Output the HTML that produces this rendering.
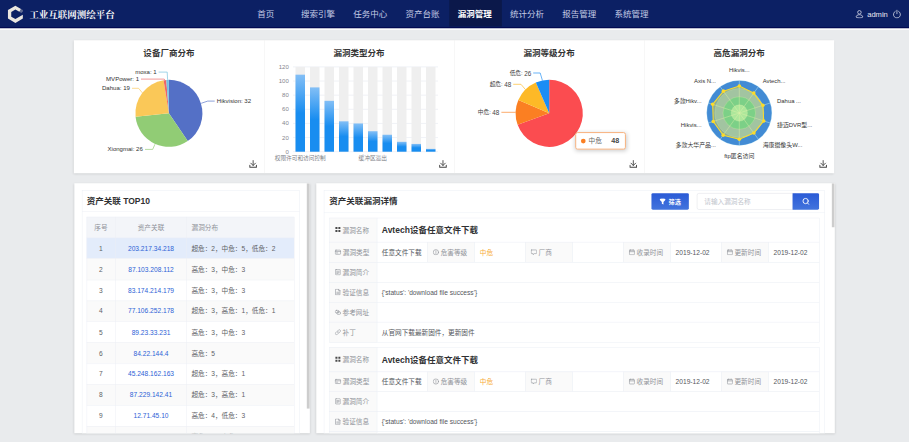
<!DOCTYPE html><html lang="zh-CN"><head><meta charset="utf-8"><title>工业互联网测绘平台</title><style>
*{box-sizing:border-box;margin:0;padding:0}
html,body{width:909px;height:442px;overflow:hidden;background:#e9ebed}
body{font-family:"Liberation Sans","Noto Sans CJK SC",sans-serif;color:#303133}
#root{position:absolute;left:0;top:0;width:1920px;height:934px;transform:scale(0.473438);transform-origin:0 0;background:#e9ebed;overflow:hidden}
.abs{position:absolute}
.hdr{position:absolute;left:0;top:0;width:1920px;height:59.800px;background:#0c2064;border-bottom:3.400px solid #020a52}
.hline{position:absolute;left:0;top:59.800px;width:1920px;height:3.600px;background:#fff}
.brand{position:absolute;left:62.1px;top:0;height:60px;line-height:61px;font-family:"Liberation Serif","Noto Serif CJK SC",serif;font-weight:700;font-size:20px;color:#f4f4f6;white-space:nowrap}
.nav{position:absolute;top:0;height:56.400px;line-height:60px;text-align:center;font-size:18px;color:#c4cbe5;white-space:nowrap;padding-right:3px}
.nav.on{background:#0b184a;color:#fff;font-weight:700}
.user{position:absolute;top:0;height:60px;line-height:60px;font-size:16px;color:#e6e8f2}
.card{position:absolute;background:#fff;box-shadow:0 2px 5px rgba(0,0,0,.13)}
.ctitle{position:absolute;font-weight:700;font-size:18px;color:#333;text-align:center;white-space:nowrap;line-height:24px}
.vdiv{position:absolute;width:1px;background:#efefef}
.inner{position:absolute;border:1px solid #ebeef5;background:#fff}
.ptitle{position:absolute;font-weight:700;font-size:18px;color:#303133;white-space:nowrap;line-height:24px}
.hsep{position:absolute;height:1px;background:#ebeef5}
.thumb{position:absolute;background:#cdcdcd}
.cell{position:absolute;font-size:14px;line-height:20px;white-space:nowrap;color:#606266}
.lab{position:absolute;background:#fafafa;border:1px solid #ebeef5;font-size:14px;color:#909399;white-space:nowrap}
.con{position:absolute;background:#fff;border:1px solid #ebeef5;font-size:14px;color:#5a5d63;white-space:nowrap}
.lab span,.con span{position:absolute;top:50%;transform:translateY(-50%);line-height:20px}
</style></head><body><div id="root">
<div class="hdr"></div><div class="hline"></div>
<svg class="abs" style="left:0;top:0" width="63.37" height="60" viewBox="0 0 63.37 60"><path d="M44.36 18.86 L32.53 12.04 L16.79 21.12 L16.79 39.29 L32.53 48.37 L48.26 39.29 L48.26 31.26 L32.53 40.32 L23.76 35.27 L23.76 25.14 L32.53 20.09 L40.87 24.9Z" fill="#ebe7e0"/><path d="M44.36 18.86 L48.26 21.12 L48.26 24.5 L45.2 27.25 L40.87 24.9Z" fill="#ebe7e0" opacity=".38"/></svg>
<div class="brand">工业互联网测绘平台</div>
<div class="nav" style="left:507.78px;width:110.36px">首页</div>
<div class="nav" style="left:618.14px;width:110.36px">搜索引擎</div>
<div class="nav" style="left:728.5px;width:110.36px">任务中心</div>
<div class="nav" style="left:838.86px;width:110.36px">资产台账</div>
<div class="nav on" style="left:949.23px;width:110.36px">漏洞管理</div>
<div class="nav" style="left:1059.59px;width:110.36px">统计分析</div>
<div class="nav" style="left:1169.95px;width:110.36px">报告管理</div>
<div class="nav" style="left:1280.32px;width:110.36px">系统管理</div>
<svg class="abs" style="left:1806.36px;top:19.64px" width="18.59" height="19.01" viewBox="0 0 18 18" fill="none" stroke="#e6e8f2" stroke-width="1.5"><circle cx="9" cy="5.6" r="3.6"/><path d="M2.2 15.2c0-3 3-4.6 6.8-4.6s6.800 1.600 6.800 4.600c0 1-3 1.700-6.800 1.700s-6.800-.7-6.800-1.700z"/></svg>
<div class="user" style="left:1831.71px">admin</div>
<svg class="abs" style="left:1885.36px;top:20.28px" width="19.01" height="19.01" viewBox="0 0 18 18" fill="none" stroke="#e6e8f2" stroke-width="1.5" stroke-linecap="round"><path d="M5.600 3.800a7 7 0 1 0 6.800 0"/><path d="M9 1.300v7.200"/></svg>
<div class="card" style="left:156.09px;top:84.7px;width:1605.91px;height:280.92px"></div>
<div class="ctitle" style="left:156.09px;width:401.48px;top:99.74px">设备厂商分布</div>
<svg class="abs" style="left:525.89px;top:337.74px" width="17.32" height="17.32" viewBox="0 0 18 18" fill="none" stroke="#444" stroke-width="1.900" stroke-linecap="round" stroke-linejoin="round"><path d="M9 1.200v10.600M3.900 6.900l5.100 5.100 5.100-5.100" stroke-width="2"/><path d="M1.800 11.600v4.200h14.400v-4.200" stroke-width="2.200"/></svg>
<div class="vdiv" style="left:557.57px;top:84.7px;height:280.92px"></div>
<div class="ctitle" style="left:557.57px;width:401.48px;top:99.74px">漏洞类型分布</div>
<svg class="abs" style="left:927.37px;top:337.74px" width="17.32" height="17.32" viewBox="0 0 18 18" fill="none" stroke="#444" stroke-width="1.900" stroke-linecap="round" stroke-linejoin="round"><path d="M9 1.200v10.600M3.900 6.900l5.100 5.100 5.100-5.100" stroke-width="2"/><path d="M1.800 11.600v4.200h14.400v-4.200" stroke-width="2.200"/></svg>
<div class="vdiv" style="left:959.05px;top:84.7px;height:280.92px"></div>
<div class="ctitle" style="left:959.05px;width:401.48px;top:99.74px">漏洞等级分布</div>
<svg class="abs" style="left:1328.84px;top:337.74px" width="17.32" height="17.32" viewBox="0 0 18 18" fill="none" stroke="#444" stroke-width="1.900" stroke-linecap="round" stroke-linejoin="round"><path d="M9 1.200v10.600M3.900 6.900l5.100 5.100 5.100-5.100" stroke-width="2"/><path d="M1.800 11.600v4.200h14.400v-4.200" stroke-width="2.200"/></svg>
<div class="vdiv" style="left:1360.53px;top:84.7px;height:280.92px"></div>
<div class="ctitle" style="left:1360.53px;width:401.48px;top:99.74px">高危漏洞分布</div>
<svg class="abs" style="left:1730.32px;top:337.74px" width="17.32" height="17.32" viewBox="0 0 18 18" fill="none" stroke="#444" stroke-width="1.900" stroke-linecap="round" stroke-linejoin="round"><path d="M9 1.200v10.600M3.900 6.900l5.100 5.100 5.100-5.100" stroke-width="2"/><path d="M1.800 11.600v4.200h14.400v-4.200" stroke-width="2.200"/></svg>
<svg class="abs" style="left:0;top:0;font-family:'Liberation Sans','Noto Sans CJK SC',sans-serif" width="1920" height="934" viewBox="0 0 1920 934"><path d="M356.75 239.31 L356.75 168.55 A70.76 70.76 0 0 1 396.5 297.85 Z" fill="#5470c6"/><path d="M356.75 239.31 L396.5 297.85 A70.76 70.76 0 0 1 286.34 246.34 Z" fill="#91cc75"/><path d="M356.75 239.31 L286.34 246.34 A70.76 70.76 0 0 1 345.54 169.45 Z" fill="#fac858"/><path d="M356.75 239.31 L345.54 169.45 A70.76 70.76 0 0 1 351.13 168.78 Z" fill="#ee6666"/><path d="M356.75 239.31 L351.13 168.78 A70.76 70.76 0 0 1 356.75 168.55 Z" fill="#73c0de"/><polyline points="424.98,218.19 438.71,213.54 453.49,213.54" fill="none" stroke="#5470c6" stroke-width="1.4"/><text x="457.93" y="213.54" font-size="12.8" fill="#333" text-anchor="start" dominant-baseline="central" font-weight="400">Hikvision: 32</text><polyline points="327.39,304.58 322.53,315.56 306.27,315.56" fill="none" stroke="#91cc75" stroke-width="1.4"/><text x="301.62" y="315.56" font-size="12.8" fill="#333" text-anchor="end" dominant-baseline="central" font-weight="400">Xiongmai: 26</text><polyline points="300.78,196.22 292.75,186.51 278.81,186.51" fill="none" stroke="#fac858" stroke-width="1.4"/><text x="274.38" y="186.51" font-size="12.8" fill="#333" text-anchor="end" dominant-baseline="central" font-weight="400">Dahua: 19</text><polyline points="348.3,168.98 346.83,167.08 297.82,167.08" fill="none" stroke="#ee6666" stroke-width="1.4"/><text x="293.6" y="167.08" font-size="12.8" fill="#333" text-anchor="end" dominant-baseline="central" font-weight="400">MVPower: 1</text><polyline points="354.01,168.55 353.16,152.29 335.0,152.29" fill="none" stroke="#73c0de" stroke-width="1.4"/><text x="330.98" y="152.29" font-size="12.8" fill="#333" text-anchor="end" dominant-baseline="central" font-weight="400">moxa: 1</text><defs><linearGradient id="bg" x1="0" y1="0" x2="0" y2="1"><stop offset="0" stop-color="#83bff6"/><stop offset="0.5" stop-color="#188df0"/><stop offset="1" stop-color="#188df0"/></linearGradient></defs><line x1="618.88" x2="925.15" y1="320.42" y2="320.42" stroke="#dfe4ee" stroke-width="1"/><text x="610.01" y="320.42" font-size="12.8" fill="#84868e" text-anchor="end" dominant-baseline="central" font-weight="400">0</text><line x1="618.88" x2="925.15" y1="290.57" y2="290.57" stroke="#dfe4ee" stroke-width="1"/><text x="610.01" y="290.57" font-size="12.8" fill="#84868e" text-anchor="end" dominant-baseline="central" font-weight="400">20</text><line x1="618.88" x2="925.15" y1="260.72" y2="260.72" stroke="#dfe4ee" stroke-width="1"/><text x="610.01" y="260.72" font-size="12.8" fill="#84868e" text-anchor="end" dominant-baseline="central" font-weight="400">40</text><line x1="618.88" x2="925.15" y1="230.86" y2="230.86" stroke="#dfe4ee" stroke-width="1"/><text x="610.01" y="230.86" font-size="12.8" fill="#84868e" text-anchor="end" dominant-baseline="central" font-weight="400">60</text><line x1="618.88" x2="925.15" y1="201.01" y2="201.01" stroke="#dfe4ee" stroke-width="1"/><text x="610.01" y="201.01" font-size="12.8" fill="#84868e" text-anchor="end" dominant-baseline="central" font-weight="400">80</text><line x1="618.88" x2="925.15" y1="171.16" y2="171.16" stroke="#dfe4ee" stroke-width="1"/><text x="610.01" y="171.16" font-size="12.8" fill="#84868e" text-anchor="end" dominant-baseline="central" font-weight="400">100</text><line x1="618.88" x2="925.15" y1="141.31" y2="141.31" stroke="#dfe4ee" stroke-width="1"/><text x="610.01" y="141.31" font-size="12.8" fill="#84868e" text-anchor="end" dominant-baseline="central" font-weight="400">120</text><rect x="624.16" y="141.31" width="20.07" height="179.12" fill="#efefef"/><rect x="624.16" y="157.73" width="20.07" height="162.7" fill="url(#bg)"/><rect x="654.79" y="141.31" width="20.07" height="179.12" fill="#efefef"/><rect x="654.79" y="184.59" width="20.07" height="135.83" fill="url(#bg)"/><rect x="685.41" y="141.31" width="20.07" height="179.12" fill="#efefef"/><rect x="685.41" y="212.95" width="20.07" height="107.47" fill="url(#bg)"/><rect x="716.04" y="141.31" width="20.07" height="179.12" fill="#efefef"/><rect x="716.04" y="256.24" width="20.07" height="64.18" fill="url(#bg)"/><rect x="746.67" y="141.31" width="20.07" height="179.12" fill="#efefef"/><rect x="746.67" y="260.72" width="20.07" height="59.71" fill="url(#bg)"/><rect x="777.29" y="141.31" width="20.07" height="179.12" fill="#efefef"/><rect x="777.29" y="277.14" width="20.07" height="43.29" fill="url(#bg)"/><rect x="807.92" y="141.31" width="20.07" height="179.12" fill="#efefef"/><rect x="807.92" y="284.6" width="20.07" height="35.82" fill="url(#bg)"/><rect x="838.55" y="141.31" width="20.07" height="179.12" fill="#efefef"/><rect x="838.55" y="299.53" width="20.07" height="20.9" fill="url(#bg)"/><rect x="869.17" y="141.31" width="20.07" height="179.12" fill="#efefef"/><rect x="869.17" y="304.0" width="20.07" height="16.42" fill="url(#bg)"/><rect x="899.8" y="141.31" width="20.07" height="179.12" fill="#efefef"/><rect x="899.8" y="314.45" width="20.07" height="5.97" fill="url(#bg)"/><text x="634.19" y="333.94" font-size="12" fill="#7c7e86" text-anchor="middle" dominant-baseline="central" font-weight="400">权限许可和访问控制</text><text x="787.33" y="333.94" font-size="12" fill="#7c7e86" text-anchor="middle" dominant-baseline="central" font-weight="400">缓冲区溢出</text><path d="M1160.03 239.31 L1160.03 168.34 A70.97 70.97 0 1 1 1093.34 263.59 Z" fill="#fb4c50"/><path d="M1160.03 239.31 L1093.34 263.59 A70.97 70.97 0 0 1 1094.84 211.24 Z" fill="#fb7f22"/><path d="M1160.03 239.31 L1094.84 211.24 A70.97 70.97 0 0 1 1131.84 174.18 Z" fill="#fdb927"/><path d="M1160.03 239.31 L1131.84 174.18 A70.97 70.97 0 0 1 1160.03 168.34 Z" fill="#1b8df5"/><polyline points="1145.66,169.82 1141.02,154.19 1126.23,154.19" fill="none" stroke="#1b8df5" stroke-width="1.4"/><text x="1122.01" y="154.19" font-size="12" fill="#444" text-anchor="end" dominant-baseline="central" font-weight="400">低危: <tspan font-size="13.4">26</tspan></text><polyline points="1109.76,189.04 1100.46,178.06 1083.99,178.06" fill="none" stroke="#fdb927" stroke-width="1.4"/><text x="1079.76" y="178.06" font-size="12" fill="#444" text-anchor="end" dominant-baseline="central" font-weight="400">超危: <tspan font-size="13.4">48</tspan></text><polyline points="1089.06,237.2 1059.06,237.2" fill="none" stroke="#fb7f22" stroke-width="1.4"/><text x="1054.84" y="237.2" font-size="12" fill="#444" text-anchor="end" dominant-baseline="central" font-weight="400">中危: <tspan font-size="13.4">48</tspan></text><circle cx="1561.56" cy="238.68" r="68.86" fill="#428BD4"/><circle cx="1561.56" cy="238.68" r="51.64" fill="#64AFE9"/><circle cx="1561.56" cy="238.68" r="34.43" fill="#26C3BE"/><circle cx="1561.56" cy="238.68" r="17.21" fill="#77EADF"/><circle cx="1561.56" cy="238.68" r="17.21" fill="none" stroke="rgba(211,253,250,.55)" stroke-width="1"/><circle cx="1561.56" cy="238.68" r="34.43" fill="none" stroke="rgba(211,253,250,.55)" stroke-width="1"/><circle cx="1561.56" cy="238.68" r="51.64" fill="none" stroke="rgba(211,253,250,.55)" stroke-width="1"/><circle cx="1561.56" cy="238.68" r="68.86" fill="none" stroke="rgba(211,253,250,.55)" stroke-width="1"/><line x1="1561.56" y1="238.68" x2="1561.56" y2="169.82" stroke="rgba(211,253,250,.7)" stroke-width="1.200"/><line x1="1561.56" y1="238.68" x2="1602.03" y2="182.97" stroke="rgba(211,253,250,.7)" stroke-width="1.200"/><line x1="1561.56" y1="238.68" x2="1627.05" y2="217.4" stroke="rgba(211,253,250,.7)" stroke-width="1.200"/><line x1="1561.56" y1="238.68" x2="1627.05" y2="259.96" stroke="rgba(211,253,250,.7)" stroke-width="1.200"/><line x1="1561.56" y1="238.68" x2="1602.03" y2="294.39" stroke="rgba(211,253,250,.7)" stroke-width="1.200"/><line x1="1561.56" y1="238.68" x2="1561.56" y2="307.54" stroke="rgba(211,253,250,.7)" stroke-width="1.200"/><line x1="1561.56" y1="238.68" x2="1521.08" y2="294.39" stroke="rgba(211,253,250,.7)" stroke-width="1.200"/><line x1="1561.56" y1="238.68" x2="1496.07" y2="259.96" stroke="rgba(211,253,250,.7)" stroke-width="1.200"/><line x1="1561.56" y1="238.68" x2="1496.07" y2="217.4" stroke="rgba(211,253,250,.7)" stroke-width="1.200"/><line x1="1561.56" y1="238.68" x2="1521.08" y2="182.97" stroke="rgba(211,253,250,.7)" stroke-width="1.200"/><polygon points="1561.56,181.65 1592.1,196.64 1611.38,222.49 1613.18,255.45 1592.35,281.06 1561.56,294.02 1527.54,285.5 1506.52,256.56 1505.31,220.4 1528.04,192.54" fill="rgba(255,228,52,.4)" stroke="#fbdb2c" stroke-width="2.200" stroke-linejoin="round"/><circle cx="1561.56" cy="181.65" r="3.8" fill="#fcdb2a"/><circle cx="1592.1" cy="196.64" r="3.8" fill="#fcdb2a"/><circle cx="1611.38" cy="222.49" r="3.8" fill="#fcdb2a"/><circle cx="1613.18" cy="255.45" r="3.8" fill="#fcdb2a"/><circle cx="1592.35" cy="281.06" r="3.8" fill="#fcdb2a"/><circle cx="1561.56" cy="294.02" r="3.8" fill="#fcdb2a"/><circle cx="1527.54" cy="285.5" r="3.8" fill="#fcdb2a"/><circle cx="1506.52" cy="256.56" r="3.8" fill="#fcdb2a"/><circle cx="1505.31" cy="220.4" r="3.8" fill="#fcdb2a"/><circle cx="1528.04" cy="192.54" r="3.8" fill="#fcdb2a"/><text x="1561.56" y="147.64" font-size="12.5" fill="#333" text-anchor="middle" dominant-baseline="central" font-weight="400">Hikvis...</text><text x="1610.85" y="170.84" font-size="12.5" fill="#333" text-anchor="start" dominant-baseline="central" font-weight="400">Avtech...</text><text x="1641.31" y="212.77" font-size="12.5" fill="#333" text-anchor="start" dominant-baseline="central" font-weight="400">Dahua ...</text><text x="1641.31" y="264.59" font-size="12.5" fill="#333" text-anchor="start" dominant-baseline="central" font-weight="400">捷迈DVR型...</text><text x="1610.85" y="306.52" font-size="12.5" fill="#333" text-anchor="start" dominant-baseline="central" font-weight="400">海康摄像头W...</text><text x="1561.56" y="329.5" font-size="12.5" fill="#333" text-anchor="middle" dominant-baseline="central" font-weight="400">ftp匿名访问</text><text x="1512.27" y="306.52" font-size="12.5" fill="#333" text-anchor="end" dominant-baseline="central" font-weight="400">多款大华产品...</text><text x="1481.81" y="264.59" font-size="12.5" fill="#333" text-anchor="end" dominant-baseline="central" font-weight="400">Hikvis...</text><text x="1481.81" y="212.77" font-size="12.5" fill="#333" text-anchor="end" dominant-baseline="central" font-weight="400">多款Hikv...</text><text x="1512.27" y="170.84" font-size="12.5" fill="#333" text-anchor="end" dominant-baseline="central" font-weight="400">Axis N...</text></svg>
<div class="abs" style="left:1215.37px;top:279.02px;width:107.09px;height:36.75px;background:#fff;border:2px solid #f7ad78;border-radius:5px;box-shadow:1px 2px 10px rgba(0,0,0,.2);font-size:14px;color:#666;line-height:32.75px;white-space:nowrap"><span class="abs" style="left:9.490000000000002px;top:11.600000000000001px;width:10.500px;height:10.500px;border-radius:50%;background:#fb7f22"></span><span class="abs" style="left:25.88px;top:1.200px">中危</span><span class="abs" style="left:73.83px;top:1.200px;font-weight:700;font-size:15px;color:#464646">48</span></div>
<div class="card" style="left:156.94px;top:386.53px;width:497.43px;height:528.69px;overflow:hidden" id="lp">
<div class="inner" style="left:15.63px;top:15.42px;width:460.04px;height:549.17px"></div>
<div class="hsep" style="left:15.63px;top:59.78px;width:460.04px"></div>
<div class="ptitle" style="left:26.19px;top:25.39px">资产关联 TOP10</div>
<div class="abs" style="left:26.19px;top:71.82px;width:437.44px;height:43.93px;background:#f3f5f9"></div>
<div class="abs" style="left:26.19px;top:115.75px;width:437.44px;height:44.21px;background:#e3ecfb"></div>
<div class="abs" style="left:26.19px;top:159.96px;width:437.44px;height:44.21px;background:#fafafa"></div>
<div class="abs" style="left:26.19px;top:204.17px;width:437.44px;height:44.21px;background:#fff"></div>
<div class="abs" style="left:26.19px;top:248.37px;width:437.44px;height:44.21px;background:#fafafa"></div>
<div class="abs" style="left:26.19px;top:292.58px;width:437.44px;height:44.21px;background:#fff"></div>
<div class="abs" style="left:26.19px;top:336.79px;width:437.44px;height:44.21px;background:#fafafa"></div>
<div class="abs" style="left:26.19px;top:381.0px;width:437.44px;height:44.21px;background:#fff"></div>
<div class="abs" style="left:26.19px;top:425.21px;width:437.44px;height:44.21px;background:#fafafa"></div>
<div class="abs" style="left:26.19px;top:469.42px;width:437.44px;height:44.21px;background:#fff"></div>
<div class="abs" style="left:26.19px;top:513.63px;width:437.44px;height:44.21px;background:#fafafa"></div>
<div class="hsep" style="left:26.19px;top:71.82px;width:437.44px"></div>
<div class="hsep" style="left:26.19px;top:115.75px;width:437.44px"></div>
<div class="hsep" style="left:26.19px;top:159.96px;width:437.44px"></div>
<div class="hsep" style="left:26.19px;top:204.17px;width:437.44px"></div>
<div class="hsep" style="left:26.19px;top:248.37px;width:437.44px"></div>
<div class="hsep" style="left:26.19px;top:292.58px;width:437.44px"></div>
<div class="hsep" style="left:26.19px;top:336.79px;width:437.44px"></div>
<div class="hsep" style="left:26.19px;top:381.0px;width:437.44px"></div>
<div class="hsep" style="left:26.19px;top:425.21px;width:437.44px"></div>
<div class="hsep" style="left:26.19px;top:469.42px;width:437.44px"></div>
<div class="hsep" style="left:26.19px;top:513.63px;width:437.44px"></div>
<div class="hsep" style="left:26.19px;top:557.83px;width:437.44px"></div>
<div class="abs" style="left:26.19px;top:71.82px;width:1px;height:506.93px;background:#ebeef5"></div>
<div class="abs" style="left:87.02px;top:71.82px;width:1px;height:506.93px;background:#ebeef5"></div>
<div class="abs" style="left:236.99px;top:71.82px;width:1px;height:506.93px;background:#ebeef5"></div>
<div class="abs" style="left:463.63px;top:71.82px;width:1px;height:506.93px;background:#ebeef5"></div>
<div class="cell" style="left:-43.82px;width:200px;text-align:center;top:84.18px;color:#909399;">序号</div>
<div class="cell" style="left:62.00999999999999px;width:200px;text-align:center;top:84.18px;color:#909399;">资产关联</div>
<div class="cell" style="left:247.55px;top:84.78px;color:#909399">漏洞分布</div>
<div class="cell" style="left:-43.82px;width:200px;text-align:center;top:128.25px;color:#606266;">1</div>
<div class="cell" style="left:62.00999999999999px;width:200px;text-align:center;top:128.25px;color:#2d62d6;">203.217.34.218</div>
<div class="cell" style="left:247.34px;top:128.25px">超危：2，中危：5，低危：2</div>
<div class="cell" style="left:-43.82px;width:200px;text-align:center;top:172.46px;color:#606266;">2</div>
<div class="cell" style="left:62.00999999999999px;width:200px;text-align:center;top:172.46px;color:#2d62d6;">87.103.208.112</div>
<div class="cell" style="left:247.34px;top:172.46px">高危：3，中危：3</div>
<div class="cell" style="left:-43.82px;width:200px;text-align:center;top:216.67000000000002px;color:#606266;">3</div>
<div class="cell" style="left:62.00999999999999px;width:200px;text-align:center;top:216.67000000000002px;color:#2d62d6;">83.174.214.179</div>
<div class="cell" style="left:247.34px;top:216.67000000000002px">高危：3，中危：3</div>
<div class="cell" style="left:-43.82px;width:200px;text-align:center;top:260.88px;color:#606266;">4</div>
<div class="cell" style="left:62.00999999999999px;width:200px;text-align:center;top:260.88px;color:#2d62d6;">77.106.252.178</div>
<div class="cell" style="left:247.34px;top:260.88px">超危：3，高危：1，低危：1</div>
<div class="cell" style="left:-43.82px;width:200px;text-align:center;top:305.09px;color:#606266;">5</div>
<div class="cell" style="left:62.00999999999999px;width:200px;text-align:center;top:305.09px;color:#2d62d6;">89.23.33.231</div>
<div class="cell" style="left:247.34px;top:305.09px">高危：3，中危：3</div>
<div class="cell" style="left:-43.82px;width:200px;text-align:center;top:349.29999999999995px;color:#606266;">6</div>
<div class="cell" style="left:62.00999999999999px;width:200px;text-align:center;top:349.29999999999995px;color:#2d62d6;">84.22.144.4</div>
<div class="cell" style="left:247.34px;top:349.29999999999995px">高危：5</div>
<div class="cell" style="left:-43.82px;width:200px;text-align:center;top:393.5px;color:#606266;">7</div>
<div class="cell" style="left:62.00999999999999px;width:200px;text-align:center;top:393.5px;color:#2d62d6;">45.248.162.163</div>
<div class="cell" style="left:247.34px;top:393.5px">超危：3，高危：1</div>
<div class="cell" style="left:-43.82px;width:200px;text-align:center;top:437.71px;color:#606266;">8</div>
<div class="cell" style="left:62.00999999999999px;width:200px;text-align:center;top:437.71px;color:#2d62d6;">87.229.142.41</div>
<div class="cell" style="left:247.34px;top:437.71px">超危：3，高危：1</div>
<div class="cell" style="left:-43.82px;width:200px;text-align:center;top:481.91999999999996px;color:#606266;">9</div>
<div class="cell" style="left:62.00999999999999px;width:200px;text-align:center;top:481.91999999999996px;color:#2d62d6;">12.71.45.10</div>
<div class="cell" style="left:247.34px;top:481.91999999999996px">高危：4，低危：3</div>
<div class="cell" style="left:-43.82px;width:200px;text-align:center;top:526.13px;color:#606266;">10</div>
<div class="cell" style="left:62.00999999999999px;width:200px;text-align:center;top:526.13px;color:#2d62d6;">80.14.165.120</div>
<div class="cell" style="left:247.34px;top:526.13px">高危：3，中危：2</div>
<div class="abs" style="left:490.67px;top:0;width:6.97px;height:528.69px;background:#fff"></div>
<div class="thumb" style="left:490.67px;top:0;width:6.97px;height:476.94px"></div>
</div>
<div class="card" style="left:668.3px;top:386.53px;width:1094.97px;height:528.69px;overflow:hidden" id="rp">
<div class="inner" style="left:15.84px;top:15.63px;width:1057.58px;height:549.17px"></div>
<div class="hsep" style="left:15.84px;top:62.1px;width:1057.58px"></div>
<div class="ptitle" style="left:27.25px;top:26.229999999999997px">资产关联漏洞详情</div>
<div class="abs" style="left:707.38px;top:21.54px;width:79.63px;height:35.27px;background:linear-gradient(#2a5ad6,#4274dd);border-radius:3px"></div>
<svg class="abs" style="left:724.49px;top:32.74px" width="13.31" height="13.52" viewBox="0 0 13 13"><path d="M0.400 2.600C0.400 1.200 3 0.400 6.500 0.400s6.100 0.800 6.100 2.200L8.200 7.400v5.200L4.800 11V7.400z" fill="#fff"/></svg>
<div class="abs" style="left:743.71px;top:30.130000000000003px;line-height:20px;font-size:13px;font-weight:700;color:#fff;white-space:nowrap">筛选</div>
<div class="abs" style="left:803.7px;top:21.54px;width:209.32px;height:35.06px;background:#fff;border:1px solid #dcdfe6;border-radius:4px 0 0 4px"></div>
<div class="abs" style="left:819.33px;top:28.86px;line-height:20px;font-size:14px;color:#c0c4cc;white-space:nowrap">请输入漏洞名称</div>
<div class="abs" style="left:1005.41px;top:21.54px;width:56.18px;height:35.06px;background:linear-gradient(#2a5ad6,#4274dd);border-radius:0 3px 3px 0"></div>
<svg class="abs" style="left:1025.69px;top:30.84px" width="16.48" height="16.48" viewBox="0 0 16 16" fill="none" stroke="#fff" stroke-width="1.800" stroke-linecap="round"><circle cx="7.400" cy="7.400" r="5.400"/><path d="M11.400 11.600l2.800 2.800"/></svg>
<div class="lab" style="left:27.25px;top:73.29px;width:101.01px;height:52.54px"></div>
<div class="con" style="left:127.26px;top:73.29px;width:935.76px;height:52.54px"></div>
<svg class="abs" style="left:38.65px;top:91.88px" width="13.52" height="13.52" viewBox="0 0 14 14" fill="none" stroke="#4a4a4a" stroke-width="1.300" stroke-linecap="round" stroke-linejoin="round"><path d="M1.500 1.500h4.500v4.500H1.500zM8 1.500h4.500v4.500H8zM1.500 8h4.500v4.500H1.500zM8 8h4.500v4.500H8z" fill="#4a4a4a" stroke="none"/></svg>
<div class="abs" style="left:55.34px;top:90.06px;line-height:20px;font-size:14px;color:#909399;white-space:nowrap">漏洞名称</div>
<div class="abs" style="left:138.14px;top:88.26px;line-height:24px;font-size:18px;font-weight:700;color:#303133;white-space:nowrap">Avtech设备任意文件下载</div>
<div class="lab" style="left:27.25px;top:124.83px;width:101.01px;height:43.24px"></div>
<div class="con" style="left:127.26px;top:124.83px;width:107.77px;height:43.24px"></div>
<svg class="abs" style="left:39.08px;top:139.41px" width="13.52" height="13.52" viewBox="0 0 14 14" fill="none" stroke="#909399" stroke-width="1.300" stroke-linecap="round" stroke-linejoin="round"><rect x="1" y="2.500" width="12" height="9" rx="1.800"/><path d="M1 5.500h12M3.500 8.500h3"/></svg>
<div class="abs" style="left:55.76px;top:136.95px;line-height:20px;font-size:14px;color:#909399;white-space:nowrap">漏洞类型</div>
<div class="abs" style="left:138.24px;top:136.95px;line-height:20px;font-size:14px;color:#54575d;white-space:nowrap">任意文件下载</div>
<div class="lab" style="left:234.03px;top:124.83px;width:101.12px;height:43.24px"></div>
<div class="con" style="left:334.15px;top:124.83px;width:107.67px;height:43.24px"></div>
<svg class="abs" style="left:245.86px;top:139.41px" width="13.52" height="13.52" viewBox="0 0 14 14" fill="none" stroke="#909399" stroke-width="1.300" stroke-linecap="round" stroke-linejoin="round"><circle cx="7" cy="7" r="5.800"/><path d="M7 3.800v4M7 9.800v.6"/></svg>
<div class="abs" style="left:262.55px;top:136.95px;line-height:20px;font-size:14px;color:#909399;white-space:nowrap">危害等级</div>
<div class="abs" style="left:345.14px;top:136.95px;line-height:20px;font-size:14px;color:#f7ac35;white-space:nowrap">中危</div>
<div class="lab" style="left:440.82px;top:124.83px;width:101.12px;height:43.24px"></div>
<div class="con" style="left:540.94px;top:124.83px;width:107.88px;height:43.24px"></div>
<svg class="abs" style="left:452.65px;top:139.41px" width="13.52" height="13.52" viewBox="0 0 14 14" fill="none" stroke="#909399" stroke-width="1.300" stroke-linecap="round" stroke-linejoin="round"><path d="M2 2h10a1 1 0 0 1 1 1v6a1 1 0 0 1-1 1H8l-2.500 2.500V10H2a1 1 0 0 1-1-1V3a1 1 0 0 1 1-1z"/></svg>
<div class="abs" style="left:469.33px;top:136.95px;line-height:20px;font-size:14px;color:#909399;white-space:nowrap">厂商</div>
<div class="abs" style="left:551.92px;top:136.95px;line-height:20px;font-size:14px;color:#54575d;white-space:nowrap"></div>
<div class="lab" style="left:647.82px;top:124.83px;width:100.91px;height:43.24px"></div>
<div class="con" style="left:747.72px;top:124.83px;width:107.88px;height:43.24px"></div>
<svg class="abs" style="left:659.64px;top:139.41px" width="13.52" height="13.52" viewBox="0 0 14 14" fill="none" stroke="#909399" stroke-width="1.300" stroke-linecap="round" stroke-linejoin="round"><rect x="1.500" y="2.500" width="11" height="10" rx="1"/><path d="M1.500 5.800h11M4.500 1v3M9.500 1v3"/></svg>
<div class="abs" style="left:676.33px;top:136.95px;line-height:20px;font-size:14px;color:#909399;white-space:nowrap">收录时间</div>
<div class="abs" style="left:758.71px;top:136.95px;line-height:20px;font-size:14px;color:#54575d;white-space:nowrap">2019-12-02</div>
<div class="lab" style="left:854.6px;top:124.83px;width:101.01px;height:43.24px"></div>
<div class="con" style="left:954.61px;top:124.83px;width:108.41px;height:43.24px"></div>
<svg class="abs" style="left:866.43px;top:139.41px" width="13.52" height="13.52" viewBox="0 0 14 14" fill="none" stroke="#909399" stroke-width="1.300" stroke-linecap="round" stroke-linejoin="round"><rect x="1.500" y="2.500" width="11" height="10" rx="1"/><path d="M1.500 5.800h11M4.500 1v3M9.500 1v3"/></svg>
<div class="abs" style="left:883.12px;top:136.95px;line-height:20px;font-size:14px;color:#909399;white-space:nowrap">更新时间</div>
<div class="abs" style="left:965.6px;top:136.95px;line-height:20px;font-size:14px;color:#54575d;white-space:nowrap">2019-12-02</div>
<div class="lab" style="left:27.25px;top:167.08px;width:101.01px;height:43.24px"></div>
<div class="con" style="left:127.26px;top:167.08px;width:935.76px;height:43.24px"></div>
<svg class="abs" style="left:39.08px;top:181.65px" width="13.52" height="13.52" viewBox="0 0 14 14" fill="none" stroke="#909399" stroke-width="1.300" stroke-linecap="round" stroke-linejoin="round"><rect x="2" y="1" width="10" height="12" rx="1"/><path d="M4.500 5h5M4.500 7.500h5M4.500 10h3"/></svg>
<div class="abs" style="left:55.34px;top:179.2px;line-height:20px;font-size:14px;color:#909399;white-space:nowrap">漏洞简介</div>
<div class="abs" style="left:138.14px;top:179.2px;line-height:20px;font-size:14px;color:#54575d;white-space:nowrap"></div>
<div class="lab" style="left:27.25px;top:209.32px;width:101.01px;height:43.24px"></div>
<div class="con" style="left:127.26px;top:209.32px;width:935.76px;height:43.24px"></div>
<svg class="abs" style="left:39.08px;top:223.89px" width="13.52" height="13.52" viewBox="0 0 14 14" fill="none" stroke="#909399" stroke-width="1.300" stroke-linecap="round" stroke-linejoin="round"><path d="M2.500 1h6l3 3v9h-9zM8.500 1v3h3M4.500 7.500h5M4.500 10h5"/></svg>
<div class="abs" style="left:55.34px;top:221.44px;line-height:20px;font-size:14px;color:#909399;white-space:nowrap">验证信息</div>
<div class="abs" style="left:138.14px;top:221.44px;line-height:20px;font-size:14px;color:#54575d;white-space:nowrap">{'status': 'download file success'}</div>
<div class="lab" style="left:27.25px;top:251.56px;width:101.01px;height:43.24px"></div>
<div class="con" style="left:127.26px;top:251.56px;width:935.76px;height:43.24px"></div>
<svg class="abs" style="left:39.08px;top:266.14px" width="13.52" height="13.52" viewBox="0 0 14 14" fill="none" stroke="#909399" stroke-width="1.300" stroke-linecap="round" stroke-linejoin="round"><rect x="1" y="2.600" width="8.600" height="5.600" rx="2.800"/><rect x="4.400" y="5.800" width="8.600" height="5.600" rx="2.800"/></svg>
<div class="abs" style="left:55.34px;top:263.69px;line-height:20px;font-size:14px;color:#909399;white-space:nowrap">参考网址</div>
<div class="abs" style="left:138.14px;top:263.69px;line-height:20px;font-size:14px;color:#54575d;white-space:nowrap"></div>
<div class="lab" style="left:27.25px;top:293.81px;width:101.01px;height:43.24px"></div>
<div class="con" style="left:127.26px;top:293.81px;width:935.76px;height:43.24px"></div>
<svg class="abs" style="left:39.08px;top:308.38px" width="13.52" height="13.52" viewBox="0 0 14 14" fill="none" stroke="#909399" stroke-width="1.300" stroke-linecap="round" stroke-linejoin="round"><path d="M6 8.200a2.600 2.600 0 0 0 3.700 0l2.200-2.200a2.600 2.600 0 0 0-3.700-3.700l-.9.900M8 5.800a2.600 2.600 0 0 0-3.700 0L2.100 8a2.600 2.600 0 0 0 3.700 3.700l.9-.9"/></svg>
<div class="abs" style="left:55.34px;top:305.93px;line-height:20px;font-size:14px;color:#909399;white-space:nowrap">补丁</div>
<div class="abs" style="left:138.14px;top:305.93px;line-height:20px;font-size:14px;color:#54575d;white-space:nowrap">从官网下载最新固件，更新固件</div>
<div class="lab" style="left:27.25px;top:346.61px;width:101.01px;height:52.54px"></div>
<div class="con" style="left:127.26px;top:346.61px;width:935.76px;height:52.54px"></div>
<svg class="abs" style="left:38.65px;top:365.2px" width="13.52" height="13.52" viewBox="0 0 14 14" fill="none" stroke="#4a4a4a" stroke-width="1.300" stroke-linecap="round" stroke-linejoin="round"><path d="M1.500 1.500h4.500v4.500H1.500zM8 1.500h4.500v4.500H8zM1.500 8h4.500v4.500H1.500zM8 8h4.500v4.500H8z" fill="#4a4a4a" stroke="none"/></svg>
<div class="abs" style="left:55.34px;top:363.38px;line-height:20px;font-size:14px;color:#909399;white-space:nowrap">漏洞名称</div>
<div class="abs" style="left:138.14px;top:361.58px;line-height:24px;font-size:18px;font-weight:700;color:#303133;white-space:nowrap">Avtech设备任意文件下载</div>
<div class="lab" style="left:27.25px;top:398.15px;width:101.01px;height:43.24px"></div>
<div class="con" style="left:127.26px;top:398.15px;width:107.77px;height:43.24px"></div>
<svg class="abs" style="left:39.08px;top:412.73px" width="13.52" height="13.52" viewBox="0 0 14 14" fill="none" stroke="#909399" stroke-width="1.300" stroke-linecap="round" stroke-linejoin="round"><rect x="1" y="2.500" width="12" height="9" rx="1.800"/><path d="M1 5.500h12M3.500 8.500h3"/></svg>
<div class="abs" style="left:55.76px;top:410.27px;line-height:20px;font-size:14px;color:#909399;white-space:nowrap">漏洞类型</div>
<div class="abs" style="left:138.24px;top:410.27px;line-height:20px;font-size:14px;color:#54575d;white-space:nowrap">任意文件下载</div>
<div class="lab" style="left:234.03px;top:398.15px;width:101.12px;height:43.24px"></div>
<div class="con" style="left:334.15px;top:398.15px;width:107.67px;height:43.24px"></div>
<svg class="abs" style="left:245.86px;top:412.73px" width="13.52" height="13.52" viewBox="0 0 14 14" fill="none" stroke="#909399" stroke-width="1.300" stroke-linecap="round" stroke-linejoin="round"><circle cx="7" cy="7" r="5.800"/><path d="M7 3.800v4M7 9.800v.6"/></svg>
<div class="abs" style="left:262.55px;top:410.27px;line-height:20px;font-size:14px;color:#909399;white-space:nowrap">危害等级</div>
<div class="abs" style="left:345.14px;top:410.27px;line-height:20px;font-size:14px;color:#f7ac35;white-space:nowrap">中危</div>
<div class="lab" style="left:440.82px;top:398.15px;width:101.12px;height:43.24px"></div>
<div class="con" style="left:540.94px;top:398.15px;width:107.88px;height:43.24px"></div>
<svg class="abs" style="left:452.65px;top:412.73px" width="13.52" height="13.52" viewBox="0 0 14 14" fill="none" stroke="#909399" stroke-width="1.300" stroke-linecap="round" stroke-linejoin="round"><path d="M2 2h10a1 1 0 0 1 1 1v6a1 1 0 0 1-1 1H8l-2.500 2.500V10H2a1 1 0 0 1-1-1V3a1 1 0 0 1 1-1z"/></svg>
<div class="abs" style="left:469.33px;top:410.27px;line-height:20px;font-size:14px;color:#909399;white-space:nowrap">厂商</div>
<div class="abs" style="left:551.92px;top:410.27px;line-height:20px;font-size:14px;color:#54575d;white-space:nowrap"></div>
<div class="lab" style="left:647.82px;top:398.15px;width:100.91px;height:43.24px"></div>
<div class="con" style="left:747.72px;top:398.15px;width:107.88px;height:43.24px"></div>
<svg class="abs" style="left:659.64px;top:412.73px" width="13.52" height="13.52" viewBox="0 0 14 14" fill="none" stroke="#909399" stroke-width="1.300" stroke-linecap="round" stroke-linejoin="round"><rect x="1.500" y="2.500" width="11" height="10" rx="1"/><path d="M1.500 5.800h11M4.500 1v3M9.500 1v3"/></svg>
<div class="abs" style="left:676.33px;top:410.27px;line-height:20px;font-size:14px;color:#909399;white-space:nowrap">收录时间</div>
<div class="abs" style="left:758.71px;top:410.27px;line-height:20px;font-size:14px;color:#54575d;white-space:nowrap">2019-12-02</div>
<div class="lab" style="left:854.6px;top:398.15px;width:101.01px;height:43.24px"></div>
<div class="con" style="left:954.61px;top:398.15px;width:108.41px;height:43.24px"></div>
<svg class="abs" style="left:866.43px;top:412.73px" width="13.52" height="13.52" viewBox="0 0 14 14" fill="none" stroke="#909399" stroke-width="1.300" stroke-linecap="round" stroke-linejoin="round"><rect x="1.500" y="2.500" width="11" height="10" rx="1"/><path d="M1.500 5.800h11M4.500 1v3M9.500 1v3"/></svg>
<div class="abs" style="left:883.12px;top:410.27px;line-height:20px;font-size:14px;color:#909399;white-space:nowrap">更新时间</div>
<div class="abs" style="left:965.6px;top:410.27px;line-height:20px;font-size:14px;color:#54575d;white-space:nowrap">2019-12-02</div>
<div class="lab" style="left:27.25px;top:440.4px;width:101.01px;height:43.24px"></div>
<div class="con" style="left:127.26px;top:440.4px;width:935.76px;height:43.24px"></div>
<svg class="abs" style="left:39.08px;top:454.97px" width="13.52" height="13.52" viewBox="0 0 14 14" fill="none" stroke="#909399" stroke-width="1.300" stroke-linecap="round" stroke-linejoin="round"><rect x="2" y="1" width="10" height="12" rx="1"/><path d="M4.500 5h5M4.500 7.500h5M4.500 10h3"/></svg>
<div class="abs" style="left:55.34px;top:452.52px;line-height:20px;font-size:14px;color:#909399;white-space:nowrap">漏洞简介</div>
<div class="abs" style="left:138.14px;top:452.52px;line-height:20px;font-size:14px;color:#54575d;white-space:nowrap"></div>
<div class="lab" style="left:27.25px;top:482.64px;width:101.01px;height:43.24px"></div>
<div class="con" style="left:127.26px;top:482.64px;width:935.76px;height:43.24px"></div>
<svg class="abs" style="left:39.08px;top:497.21px" width="13.52" height="13.52" viewBox="0 0 14 14" fill="none" stroke="#909399" stroke-width="1.300" stroke-linecap="round" stroke-linejoin="round"><path d="M2.500 1h6l3 3v9h-9zM8.500 1v3h3M4.500 7.500h5M4.500 10h5"/></svg>
<div class="abs" style="left:55.34px;top:494.76px;line-height:20px;font-size:14px;color:#909399;white-space:nowrap">验证信息</div>
<div class="abs" style="left:138.14px;top:494.76px;line-height:20px;font-size:14px;color:#54575d;white-space:nowrap">{'status': 'download file success'}</div>
<div class="lab" style="left:27.25px;top:524.88px;width:101.01px;height:43.24px"></div>
<div class="con" style="left:127.26px;top:524.88px;width:935.76px;height:43.24px"></div>
<svg class="abs" style="left:39.08px;top:539.46px" width="13.52" height="13.52" viewBox="0 0 14 14" fill="none" stroke="#909399" stroke-width="1.300" stroke-linecap="round" stroke-linejoin="round"><rect x="1" y="2.600" width="8.600" height="5.600" rx="2.800"/><rect x="4.400" y="5.800" width="8.600" height="5.600" rx="2.800"/></svg>
<div class="abs" style="left:55.34px;top:537.01px;line-height:20px;font-size:14px;color:#909399;white-space:nowrap">参考网址</div>
<div class="abs" style="left:138.14px;top:537.01px;line-height:20px;font-size:14px;color:#54575d;white-space:nowrap"></div>
<div class="lab" style="left:27.25px;top:567.13px;width:101.01px;height:43.24px"></div>
<div class="con" style="left:127.26px;top:567.13px;width:935.76px;height:43.24px"></div>
<svg class="abs" style="left:39.08px;top:581.7px" width="13.52" height="13.52" viewBox="0 0 14 14" fill="none" stroke="#909399" stroke-width="1.300" stroke-linecap="round" stroke-linejoin="round"><path d="M6 8.200a2.600 2.600 0 0 0 3.700 0l2.200-2.200a2.600 2.600 0 0 0-3.700-3.700l-.9.900M8 5.800a2.600 2.600 0 0 0-3.700 0L2.100 8a2.600 2.600 0 0 0 3.700 3.700l.9-.9"/></svg>
<div class="abs" style="left:55.34px;top:579.25px;line-height:20px;font-size:14px;color:#909399;white-space:nowrap">补丁</div>
<div class="abs" style="left:138.14px;top:579.25px;line-height:20px;font-size:14px;color:#54575d;white-space:nowrap">从官网下载最新固件，更新固件</div>
<div class="abs" style="left:1089.06px;top:0;width:6.13px;height:528.69px;background:#fff"></div>
<div class="thumb" style="left:1089.06px;top:0;width:6.13px;height:93.36px"></div>
</div>
</div></body></html>
